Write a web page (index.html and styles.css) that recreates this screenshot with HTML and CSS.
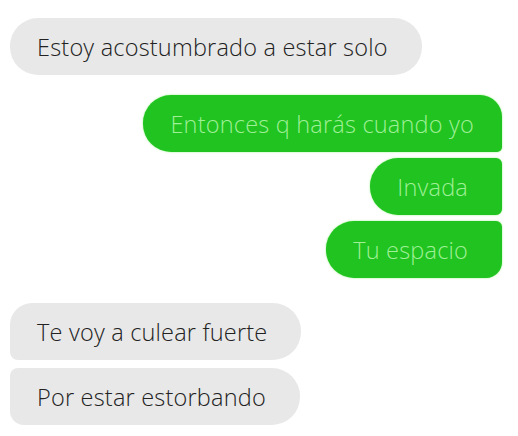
FILE: index.html
```html
<!DOCTYPE html>
<html lang="es">
<head>
    <meta charset="UTF-8">
    <title>Chat</title>
<link rel="stylesheet" href="styles.css">
</head>
<body>

    <div class="chat">
        <div class="msg in single">Estoy acostumbrado a estar solo</div>

        <div class="msg out first">Entonces q harás cuando yo</div>
        <div class="msg out middle">Invada</div>
        <div class="msg out last">Tu espacio</div>

        <div class="msg in first">Te voy a culear fuerte</div>
        <div class="msg in last">Por estar estorbando</div>
    </div>

</body>
</html>
```

FILE: styles.css
```css
/* Basic reset */
* {
    margin: 0;
    padding: 0;
    box-sizing: border-box;
}

body {
    font-family: "Open Sans", "Noto Sans", sans-serif;
    background-color: #fff;
}

.chat {
    display: flex;
    flex-direction: column;
    padding: 18px 16px 0 10px;
}

.msg {
    height: 57px;
    display: flex;
    align-items: center;
    padding: 0 34px 0 27px;
    font-size: 23.5px;
    font-weight: 300;
    letter-spacing: 0.2px;
    white-space: nowrap;
}

.msg.in {
    align-self: flex-start;
    background-color: #e8e8e8;
    color: #222;
    border-radius: 28px;
}

.msg.out {
    align-self: flex-end;
    background-color: #20c320;
    color: #9ff096;
    border-radius: 28px;
    box-shadow: 0 0 2px #8ef07e;
}

/* spacing between messages */
.msg.single + .msg.first {
    margin-top: 20px;
}

.msg.out + .msg.out {
    margin-top: 6px;
}

.msg.out.last + .msg.in {
    margin-top: 25px;
}

.msg.in + .msg.in {
    margin-top: 8px;
}

/* grouped bubble corners */
.msg.out.first {
    padding-right: 28px;
    border-radius: 28px 22px 5px 28px;
}

.msg.out.middle {
    border-radius: 28px 6px 6px 28px;
}

.msg.out.last {
    border-radius: 28px 6px 16px 28px;
}

.msg.in.first {
    border-radius: 22px 28px 28px 8px;
}

.msg.in.last {
    border-radius: 8px 28px 28px 14px;
}
```
